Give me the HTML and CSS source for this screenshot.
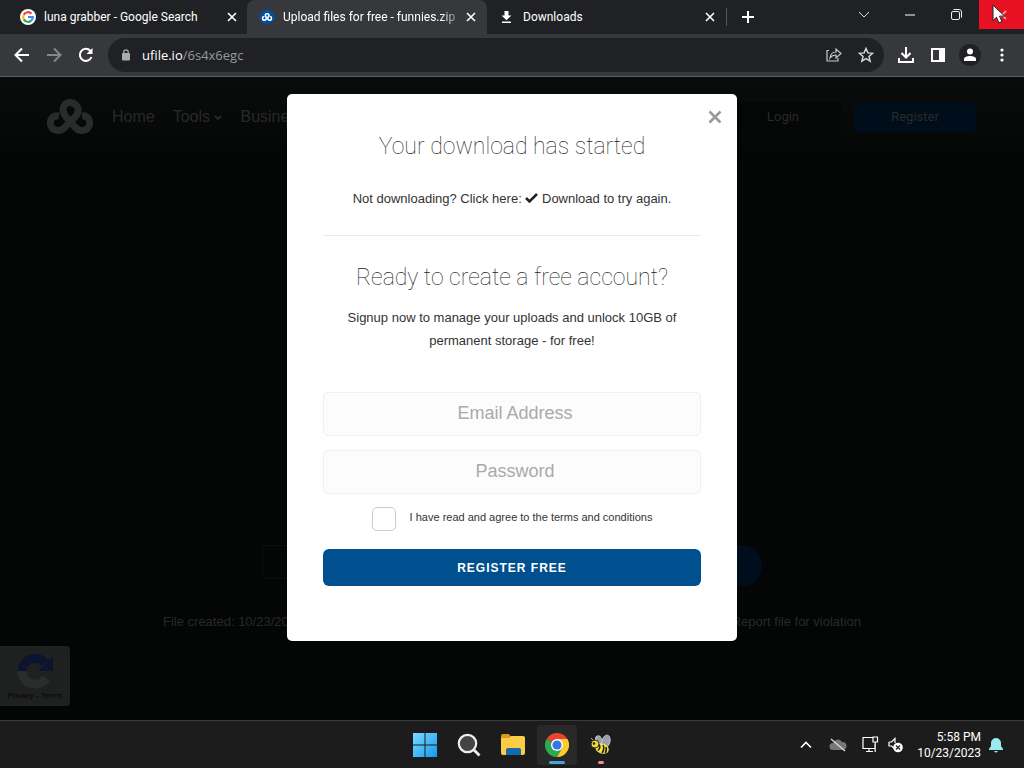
FILE: index.html
```html
<!DOCTYPE html>
<html lang="en">
<head>
<meta charset="utf-8">
<meta name="viewport" content="width=device-width, initial-scale=1">
<title>Upload files for free - funnies.zip</title>
<link rel="stylesheet" href="styles.css">
</head>
<body>
<svg class="defs" aria-hidden="true">
  <symbol id="x" viewBox="0 0 10 10"><path d="M1 1l8 8M9 1l-8 8" stroke="currentColor" stroke-width="1.6"/></symbol>
  <symbol id="knot" viewBox="0 0 46 36"><path d="M12 17C5 16 2 22 4 27c2 5 9 6 13 2L28 18c4-4 4-9 1-12-4-4-10-3-12 1-2 4-1 7 2 11l10 11c4 4 11 3 13-2 2-5-1-11-7-10" fill="none" stroke="currentColor" stroke-width="7"/></symbol>
</svg>
<header class="browser">
  <div class="tabstrip">
    <div class="tab">
      <svg class="favicon" viewBox="0 0 16 16"><circle cx="8" cy="8" r="8" fill="#fff"/><g fill="none" stroke-width="2.2"><path d="M11.4 4.7A4.8 4.8 0 0 0 3.8 5.6" stroke="#ea4335"/><path d="M3.8 5.6a4.8 4.8 0 0 0 0 4.8" stroke="#fbbc05"/><path d="M3.8 10.4a4.8 4.8 0 0 0 7.4 1.2" stroke="#34a853"/><path d="M11.2 11.6A4.8 4.8 0 0 0 12.8 8H8" stroke="#4285f4"/></g></svg>
      <span class="title">luna grabber - Google Search</span>
      <button class="tab-close" aria-label="Close tab"><svg width="10" height="10"><use href="#x"/></svg></button>
    </div>
    <div class="tab active">
      <svg class="favicon" viewBox="0 0 16 16"><circle cx="8" cy="8" r="7.5" fill="#00509b"/><svg x="2.5" y="3.5" width="11" height="9" color="#fff"><use href="#knot"/></svg></svg>
      <span class="title">Upload files for free - funnies.zip</span>
      <button class="tab-close" aria-label="Close tab"><svg width="10" height="10"><use href="#x"/></svg></button>
    </div>
    <div class="tab">
      <svg class="favicon" viewBox="0 0 16 16"><path d="M5.500 2h4v4.500h3L7.500 11.200 2.500 6.500h3zM3 12.500h9v1.500H3z" fill="#fff"/></svg>
      <span class="title">Downloads</span>
      <button class="tab-close" aria-label="Close tab"><svg width="10" height="10"><use href="#x"/></svg></button>
    </div>
    <button class="new-tab" aria-label="New tab"><svg width="12" height="12"><path d="M6 0v12M0 6h12" stroke="#fff" stroke-width="2"/></svg></button>
    <div class="window-controls">
      <button class="win" aria-label="Search tabs"><svg width="12" height="8"><path d="M1 1l5 5 5-5" fill="none" stroke="#ddd"/></svg></button>
      <button class="win" aria-label="Minimize"><svg width="10" height="2"><path d="M0 1h10" stroke="#fff"/></svg></button>
      <button class="win" aria-label="Restore"><svg width="11" height="11" fill="none" stroke="#eee"><rect x=".5" y="2.500" width="8" height="8" rx="1.500"/><path d="M2.500 .5h5.500q2.500 0 2.500 2.500v5.500"/></svg></button>
      <button class="win win-close" aria-label="Close"><svg width="10" height="10" color="#ffb4bb"><use href="#x"/></svg>
        <svg class="pointer" width="14" height="20" viewBox="0 0 14 20"><path d="M1 1v15.500l3.500-3.300 2.400 5.600 3-1.300-2.400-5.400h5z" fill="#fff" stroke="#222"/></svg>
      </button>
    </div>
  </div>
  <div class="toolbar">
    <button class="tool" aria-label="Back"><svg width="16" height="16"><path d="M15 8H2M8 1.500L1.500 8 8 14.500" fill="none" stroke="#fff" stroke-width="2"/></svg></button>
    <button class="tool" aria-label="Forward"><svg width="16" height="16"><path d="M1 8h13M8 1.500L14.500 8 8 14.500" fill="none" stroke="#85868a" stroke-width="2"/></svg></button>
    <button class="tool" aria-label="Reload"><svg width="16" height="16"><path d="M13.500 10A6 6 0 1 1 12.300 3.800" fill="none" stroke="#fff" stroke-width="2"/><path d="M14.500 1v6h-6z" fill="#fff"/></svg></button>
    <div class="omnibox">
      <svg width="10" height="12" viewBox="0 0 10 12"><rect x="1" y="4" width="8" height="7.500" rx="1" fill="#a9abae"/><path d="M2.800 4.500V3a2.200 2.200 0 0 1 4.400 0v1.500" fill="none" stroke="#a9abae" stroke-width="1.300"/></svg>
      <span class="url">ufile.io<span class="path">/6s4x6egc</span></span>
      <button class="tool" aria-label="Share"><svg width="16" height="16" fill="none" stroke="#c7c8ca" stroke-width="1.200"><path d="M3 3.500H1V14h11v-3"/><path d="M4 11c.5-4 3-6 6-6V2l5 4.500L10 11V8C7.500 8 5.500 9 4 11z"/></svg></button>
      <button class="tool" aria-label="Bookmark"><svg width="16" height="16"><path d="M8 1.500l1.900 4.400 4.700.4-3.600 3.100 1.100 4.700L8 11.600l-4.100 2.500L5 9.400 1.400 6.300l4.700-.4z" fill="none" stroke="#d5d6d8" stroke-width="1.500"/></svg></button>
    </div>
    <div class="actions">
      <button class="tool" aria-label="Downloads"><svg width="18" height="18" fill="none" stroke="#fff" stroke-width="2"><path d="M9 1v10M4.500 7L9 11.500 13.500 7M2 12v4h14v-4"/></svg></button>
      <button class="tool" aria-label="Side panel"><svg width="14" height="14"><path d="M0 0h14v14H0zM2 2v10h6V2z" fill="#fff" fill-rule="evenodd"/></svg></button>
      <button class="tool" aria-label="Profile"><svg width="22" height="22"><circle cx="11" cy="11" r="11" fill="#202124"/><circle cx="11" cy="7.500" r="3" fill="#fff"/><path d="M5 17v-2c0-4 12-4 12 0v2z" fill="#fff"/></svg></button>
      <button class="tool" aria-label="Menu"><svg width="4" height="14" fill="#fff"><circle cx="2" cy="2" r="1.600"/><circle cx="2" cy="7" r="1.600"/><circle cx="2" cy="12" r="1.600"/></svg></button>
    </div>
  </div>
</header>

<main class="page">
  <nav class="site-nav">
    <svg class="logo" width="46" height="36"><use href="#knot"/></svg>
    <a href="#">Home</a>
    <a href="#">Tools <svg width="8" height="8"><path d="M1 2l3 3 3-3" fill="none" stroke="currentColor" stroke-width="1.800"/></svg></a>
    <a href="#">Business</a>
    <div class="account"><a class="login" href="#">Login</a><a class="register" href="#">Register</a></div>
  </nav>
  <section class="file">
    <div class="file-row"><span class="file-link"></span><span class="file-get"></span></div>
    <div class="file-meta"><span>File created: 10/23/2023</span><a href="#">Report file for violation</a></div>
  </section>
  <aside class="captcha">
    <svg width="40" height="40" viewBox="0 0 40 40" fill="none" stroke-width="9"><path d="M7 20A13 13 0 0 1 30 12" stroke="#0c1430"/><path d="M38 5v15H23z" fill="#0c1430"/><path d="M7 20a13 13 0 0 0 24 7" stroke="#2b2c2c"/></svg>
    <span>Privacy - Terms</span>
  </aside>
  <div class="overlay">
    <form class="modal">
      <button type="button" class="dismiss" aria-label="Close"><svg width="14" height="14" viewBox="0 0 14 14"><path d="M1.500 1.500l11 11M12.500 1.500l-11 11" stroke="#999" stroke-width="2.500"/></svg></button>
      <h2>Your download has started</h2>
      <p class="retry">Not downloading? Click here: <svg width="13" height="10" viewBox="0 0 13 10"><path d="M1 5l3.500 3.500L12 1" fill="none" stroke="#222" stroke-width="2.500"/></svg> Download to try again.</p>
      <hr>
      <h2>Ready to create a free account?</h2>
      <p class="pitch">Signup now to manage your uploads and unlock 10GB of permanent storage - for free!</p>
      <input class="field" type="email" placeholder="Email Address" aria-label="Email Address">
      <input class="field" type="password" placeholder="Password" aria-label="Password">
      <label class="terms"><input type="checkbox"><span>I have read and agree to the terms and conditions</span></label>
      <button type="button" class="submit">REGISTER FREE</button>
    </form>
  </div>
</main>

<footer class="taskbar">
  <div class="apps">
    <button class="app" aria-label="Start"><svg width="24" height="24"><defs><linearGradient id="win" x2="1" y2="1"><stop stop-color="#7bdcff"/><stop offset="1" stop-color="#1597ee"/></linearGradient></defs><path d="M0 0h11.500v11.500H0zM12.500 0H24v11.500H12.500zM0 12.500h11.500V24H0zM12.500 12.500H24V24H12.500z" fill="url(#win)"/></svg></button>
    <button class="app" aria-label="Search"><svg width="24" height="24"><circle cx="10.500" cy="10.500" r="8.700" fill="#444" stroke="#eee" stroke-width="2.200"/><path d="M17 17l5.500 5.500" stroke="#eee" stroke-width="2.800"/></svg></button>
    <button class="app" aria-label="File Explorer"><svg width="24" height="24"><path d="M0 3q0-2 2-2h6l2 3h14v6H0z" fill="#d89b16"/><path d="M0 5h8l2-2h12q2 0 2 2v15q0 2-2 2H2q-2 0-2-2z" fill="#fbcd45"/><path d="M5 22v-5q0-2 2-2h11q2 0 2 2v5z" fill="#1769ad"/></svg></button>
    <button class="app current" aria-label="Chrome"><svg width="24" height="24" viewBox="0 0 24 24"><path d="M12 12L1.600 6A12 12 0 0 1 22.400 6H12z" fill="#ea4335"/><path d="M1.600 6A12 12 0 0 0 12 24l5.200-9L12 12z" fill="#2da94f"/><path d="M22.400 6A12 12 0 0 1 12 24l5.200-9L12 6z" fill="#fdcc28"/><circle cx="12" cy="12" r="6" fill="#fff"/><circle cx="12" cy="12" r="4.600" fill="#3277e8"/></svg></button>
    <button class="app alert" aria-label="Bee"><svg width="22" height="22" viewBox="0 0 22 22"><g fill="#9ba0ac" stroke="#c3c6cf" stroke-width=".8"><ellipse cx="9" cy="6" rx="3" ry="4.500" transform="rotate(-25 9 6)"/><ellipse cx="16" cy="7.500" rx="4" ry="6.500" transform="rotate(15 16 7.500)"/></g><ellipse cx="12" cy="14.500" rx="7" ry="5" fill="#f4e545" transform="rotate(20 12 14.500)"/><path d="M9 10.500q2 3-1 6M13 11q2 4-1 8M16 13q1 4-1 6" fill="none" stroke="#222" stroke-width="1.600"/><circle cx="5" cy="10" r="4" fill="#e9dc3c" stroke="#332f10"/><circle cx="4" cy="9.500" r="1.300" fill="#222"/><path d="M3 6L1 4M6 6V3" stroke="#ccc" stroke-width=".8"/></svg></button>
  </div>
  <div class="tray">
    <svg width="12" height="8"><path d="M1 6.500l5-5 5 5" fill="none" stroke="#fff" stroke-width="1.600"/></svg>
    <svg class="cloud" width="18" height="14"><path d="M4 12a3.500 3.500 0 0 1 0-7 5 5 0 0 1 9-1 4 4 0 0 1 1 8z" fill="#777"/><path d="M2 1l14 12" stroke="#ddd" stroke-width="1.300"/></svg>
    <svg class="net" width="17" height="17" fill="none" stroke="#fff" stroke-width="1.200"><path d="M11 1.500H1v11h12V8M7 12.500v3M4 15.500h7M11 1h4.500v5H11zM13.200 6v10"/></svg>
    <svg class="sound" width="16" height="16"><path d="M1 5h2.500L7 1.500V6M7 12L3.500 9H1V5" fill="none" stroke="#fff" stroke-width="1.200"/><circle cx="10" cy="10.500" r="4.800" fill="#fff"/><path d="M8 8.500l4 4M12 8.500l-4 4" stroke="#222" stroke-width="1.200"/></svg>
    <time datetime="2023-10-23T17:58">5:58 PM<br>10/23/2023</time>
    <svg class="bell" width="14" height="16"><path d="M0 12l2-3V6a5 5 0 0 1 10 0v3l2 3v1H0zM5 14h4q-2 3-4 0z" fill="#99ebf0"/></svg>
  </div>
</footer>
</body>
</html>
```
FILE: styles.css
```css
* { box-sizing: border-box; }
body {
  margin: 0;
  min-height: 100vh;
  display: flex;
  flex-direction: column;
  background: #040505;
  font-family: "Liberation Sans", Arial, sans-serif;
}
button {
  border: 0;
  padding: 0;
  background: none;
  color: inherit;
  font: inherit;
  display: flex;
  align-items: center;
  justify-content: center;
}
a { color: inherit; text-decoration: none; }
.defs { position: absolute; width: 0; height: 0; }

/* Browser frame */
.browser { color: #fff; font-family: "Open Sans", "Noto Sans", sans-serif; }
.tabstrip { display: flex; height: 34px; background: #202124; }
.tab {
  flex: 0 1 240px;
  min-width: 0;
  display: flex;
  align-items: center;
  gap: 8px;
  padding: 0 12px;
  font: 12px/32px Roboto, "Open Sans", sans-serif;
}
.tab:first-child { flex-basis: 247px; padding: 0 10px 0 20px; }
.tab.active { background: #37383b; border-radius: 8px 8px 0 0; padding-right: 11px; }
.favicon { width: 16px; height: 16px; flex: none; }
.title { flex: 1; overflow: hidden; white-space: nowrap; }
.active .title { mask-image: linear-gradient(to right, #000 90%, #0004); }
.tab-close { width: 10px; height: 16px; }
.new-tab { width: 43px; height: 18px; margin: 8px 0 0 -1px; border-left: 1px solid #55565a; }
.window-controls { display: flex; margin-left: auto; }
.win { width: 46px; height: 29px; }
.win-close { position: relative; width: 45px; background: #e81123; }
.pointer { position: absolute; left: 13px; top: 4px; }
.toolbar {
  display: flex;
  align-items: center;
  height: 43px;
  padding: 0 6px;
  background: #37383b;
  border-bottom: 1px solid #5b5c5f;
}
.tool { width: 32px; height: 32px; }
.omnibox {
  flex: 1;
  display: flex;
  align-items: center;
  height: 34px;
  margin: 0 6px;
  padding: 0 2px 0 13px;
  border-radius: 17px;
  background: #202124;
}
.url { flex: 1; padding-left: 11px; font-size: 13px; }
.path { color: #989a9d; }
.actions { display: flex; }

/* Dimmed site */
.page { position: relative; flex: 1; display: flex; flex-direction: column; color: #282a2a; }
.site-nav {
  display: flex;
  align-items: center;
  height: 80px;
  padding: 0 48px 0 47px;
  gap: 18px;
  background: linear-gradient(#0a0b0b, #070808 60%, #040505);
  font-size: 16px;
}
.logo { color: #2a2c2c; margin-right: 1px; }
.account { display: flex; margin-left: auto; font: 13px/30px Roboto, sans-serif; text-align: center; }
.login { width: 116px; margin-right: 13px; border-radius: 4px; background: #050606; }
.register { width: 122px; border-radius: 4px; background: #000d1a; }
.file { margin-top: auto; padding: 0 163px 88px; font-size: 13px; }
.file-row { display: flex; height: 41px; margin: 0 99px 26px; }
.file-link { flex: 1; height: 34px; border: 1px solid #0c0d0d; border-radius: 4px; }
.file-get { width: 140px; border-radius: 20px; background: #000d1c; }
.file-meta { display: flex; justify-content: space-between; line-height: 20px; }
.captcha {
  position: absolute;
  left: 0;
  bottom: 14px;
  width: 70px;
  height: 60px;
  padding-top: 5px;
  display: flex;
  flex-direction: column;
  align-items: center;
  border-radius: 0 4px 4px 0;
  background: #1f2020;
  color: #050505;
  font-size: 8px;
}

/* Signup dialog */
.overlay { position: absolute; inset: 0; display: flex; justify-content: center; align-items: flex-start; padding-top: 17px; }
.modal {
  position: relative;
  width: 450px;
  max-width: 100%;
  padding: 37px 36px 55px;
  border-radius: 5px;
  background: #fff;
  color: #333;
  text-align: center;
}
.dismiss { position: absolute; top: 16px; right: 15px; }
h2 { margin: 0; font: 100 23px/32px Roboto, sans-serif; color: #222; }
p { margin: 0; font-size: 13px; }
.retry { padding: 24px 0; line-height: 24px; }
hr { margin: 0 0 26px; border: 0; border-top: 1px solid #eaeaea; }
.pitch { padding: 12px 20px 40px; line-height: 23px; }
.field {
  display: block;
  width: 100%;
  height: 44px;
  margin-bottom: 14px;
  padding: 0 2px 2px 8px;
  border: 1px solid #f0f0f0;
  border-radius: 5px;
  background: #fcfcfc;
  font: 18px "Liberation Sans", Arial, sans-serif;
  text-align: center;
}
.field::placeholder { color: #aaa; }
.terms { display: flex; justify-content: center; gap: 14px; font-size: 11px; line-height: 20px; margin: -1px 0 18px; }
.terms input {
  appearance: none;
  width: 24px;
  height: 24px;
  margin: 0;
  border: 1px solid #ccc;
  border-radius: 5px;
  background: #fff;
}
.submit {
  width: 100%;
  height: 37px;
  border-radius: 6px;
  background: #00508f;
  color: #fff;
  font-size: 12px;
  font-weight: 700;
  letter-spacing: 1px;
}

/* Taskbar */
.taskbar {
  display: grid;
  grid-template-columns: 1fr auto 1fr;
  height: 48px;
  border-top: 1px solid #393a3a;
  background: #1c1c1c;
  color: #fff;
  font: 12px/16px Roboto, "Open Sans", sans-serif;
}
.apps { grid-column: 2; display: flex; align-items: center; padding-left: 2px; }
.app { position: relative; width: 44px; height: 40px; border-radius: 4px; }
.current { width: 40px; margin: 0 2px; background: #292929; }
.current::after, .alert::after {
  content: "";
  position: absolute;
  bottom: 1px;
  width: 16px;
  height: 3px;
  border-radius: 2px;
  background: #4ba3dc;
}
.alert::after { width: 6px; background: #f08a9c; }
.tray { display: flex; align-items: center; justify-content: flex-end; padding-right: 21px; }
.cloud { margin-left: 17px; }
.net { margin-left: 15px; }
.sound { margin-left: 9px; }
.tray time { margin-left: 13px; text-align: right; }
.bell { margin-left: 8px; }
```
